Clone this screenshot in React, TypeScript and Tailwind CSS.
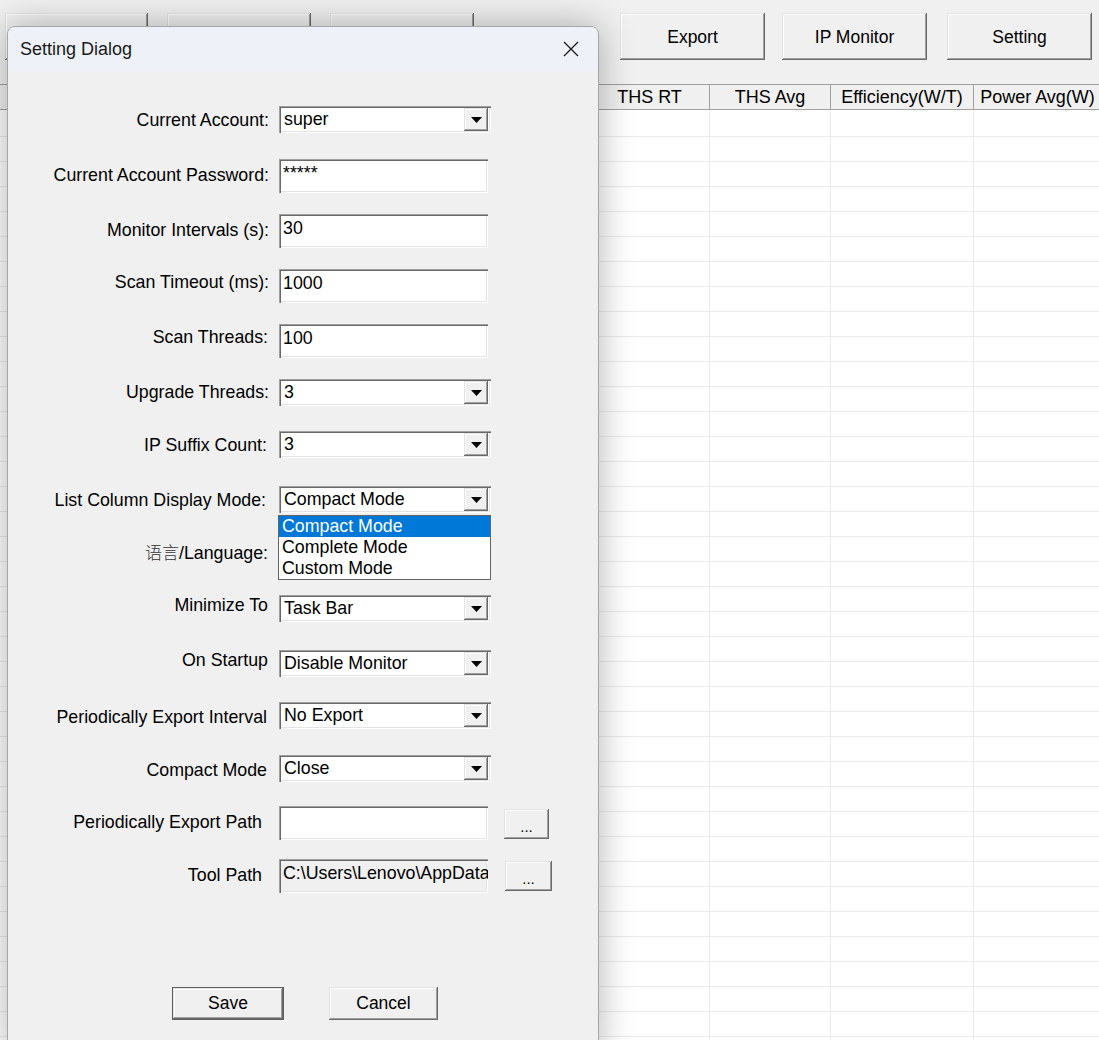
import type { ReactNode } from "react";

const raised =
  "bg-[#f0f0f0] shadow-[inset_-1px_-1px_0_#696969,inset_1px_1px_0_#e3e3e3,inset_-2px_-2px_0_#a0a0a0,inset_2px_2px_0_#ffffff]";
const sunken =
  "shadow-[inset_1px_1px_0_#a0a0a0,inset_2px_2px_0_#696969,inset_-1px_-1px_0_#ffffff,inset_-2px_-2px_0_#e3e3e3]";

const columns = [
  { title: "", w: "w-[590px]" },
  { title: "THS RT", w: "w-[119px]" },
  { title: "THS Avg", w: "w-[121px]" },
  { title: "Efficiency(W/T)", w: "w-[143px]" },
  { title: "Power Avg(W)", w: "w-[128px]" },
];

function Toolbar() {
  return (
    <div className="flex h-[84px] shrink-0 items-start pt-[13px] text-[17.5px]">
      <div className={`ml-[5px] h-[47px] w-[143px] ${raised}`} />
      <div className={`ml-[19px] h-[47px] w-[144px] ${raised}`} />
      <div className={`ml-[19px] h-[47px] w-[144px] ${raised}`} />
      <button className={`ml-[146px] flex h-[47px] w-[145px] items-center justify-center pt-[2px] ${raised}`}>Export</button>
      <button className={`ml-[17px] flex h-[47px] w-[145px] items-center justify-center pt-[2px] ${raised}`}>IP Monitor</button>
      <button className={`ml-[20px] flex h-[47px] w-[145px] items-center justify-center pt-[2px] ${raised}`}>Setting</button>
    </div>
  );
}

function MinerTable() {
  const rows = Array.from({ length: 38 }, (_, i) => i);
  return (
    <div className="flex flex-col">
      <div className="flex h-[26px] shrink-0 border-y border-[#a0a0a0] bg-[#f0f0f0] text-[18px] leading-[24px]">
        {columns.map((c, i) => (
          <div
            key={i}
            className={`${c.w} shrink-0 overflow-hidden whitespace-nowrap text-center ${i > 1 ? "border-l border-[#a0a0a0]" : ""}`}
          >
            {c.title}
          </div>
        ))}
      </div>
      <div className="bg-white pt-[2px]">
        {rows.map((r) => (
          <div key={r} className="flex h-[25px] border-b border-[#ebebeb]">
            {columns.map((c, i) => (
              <div key={i} className={`${c.w} shrink-0 ${i > 1 ? "border-l border-[#ebebeb]" : ""}`} />
            ))}
          </div>
        ))}
      </div>
    </div>
  );
}

function FormRow({
  label,
  rowClass,
  labelClass,
  children,
}: {
  label: ReactNode;
  rowClass: string;
  labelClass: string;
  children: ReactNode;
}) {
  return (
    <div className={`flex shrink-0 items-start ${rowClass}`}>
      <div className={`w-[271px] shrink-0 whitespace-nowrap text-right leading-[20px] ${labelClass}`}>{label}</div>
      {children}
    </div>
  );
}

function TextBox({ value, muted }: { value: string; muted?: boolean }) {
  return (
    <div
      className={`h-[34px] w-[209px] shrink-0 overflow-hidden whitespace-nowrap pl-[4px] pt-[4px] leading-[20px] ${sunken} ${muted ? "bg-[#f0f0f0]" : "bg-white"}`}
    >
      {value}
    </div>
  );
}

function ComboBox({ value, children }: { value: string; children?: ReactNode }) {
  return (
    <div className={`relative flex h-[27px] w-[212px] shrink-0 bg-white p-[2px] ${sunken}`}>
      <div className="flex-1 overflow-hidden whitespace-nowrap pl-[3px] leading-[23px]">{value}</div>
      <div className={`mr-[1px] flex w-[24px] items-center justify-center ${raised}`}>
        <svg width="11" height="6" viewBox="0 0 11 6">
          <path d="M0 0H11L5.5 6Z" fill="#000" />
        </svg>
      </div>
      {children}
    </div>
  );
}

function BrowseButton({ className }: { className: string }) {
  return (
    <button className={`flex shrink-0 items-center justify-center pt-[6px] text-[15px] ${raised} ${className}`}>...</button>
  );
}

function SettingDialog() {
  const modes = ["Compact Mode", "Complete Mode", "Custom Mode"];
  return (
    <div className="absolute left-[7px] top-[26px] flex h-[1030px] w-[592px] flex-col overflow-hidden rounded-t-[8px] border border-[#a6a6a6] bg-[#f0f0f0] shadow-[0_0_36px_rgba(0,0,0,0.3)]">
      <div className="flex h-[44px] shrink-0 items-center justify-between bg-[#eef2f8] pl-[12px]">
        <span className="text-[18px] text-[#1a1a1a]">Setting Dialog</span>
        <div className="mr-[4px] flex h-full w-[46px] items-center justify-center">
          <svg width="16" height="16" viewBox="0 0 16 16">
            <path d="M1 1L15 15M15 1L1 15" stroke="#1a1a1a" strokeWidth="1.3" />
          </svg>
        </div>
      </div>

      <div className="flex flex-col pt-[35px] text-[17.8px]">
        <FormRow label="Current Account:" rowClass="h-[53px]" labelClass="pr-[10px] pt-[4px]">
          <ComboBox value="super" />
        </FormRow>
        <FormRow label="Current Account Password:" rowClass="h-[55px]" labelClass="pr-[10px] pt-[6px]">
          <TextBox value="*****" />
        </FormRow>
        <FormRow label="Monitor Intervals (s):" rowClass="h-[55px]" labelClass="pr-[10px] pt-[6px]">
          <TextBox value="30" />
        </FormRow>
        <FormRow label="Scan Timeout (ms):" rowClass="h-[55px]" labelClass="pr-[10px] pt-[3px]">
          <TextBox value="1000" />
        </FormRow>
        <FormRow label="Scan Threads:" rowClass="h-[55px]" labelClass="pr-[11px] pt-[3px]">
          <TextBox value="100" />
        </FormRow>
        <FormRow label="Upgrade Threads:" rowClass="h-[52px]" labelClass="pr-[10px] pt-[3px]">
          <ComboBox value="3" />
        </FormRow>
        <FormRow label="IP Suffix Count:" rowClass="h-[55px]" labelClass="pr-[12px] pt-[4px]">
          <ComboBox value="3" />
        </FormRow>
        <FormRow label="List Column Display Mode:" rowClass="relative z-10 h-[53px]" labelClass="pr-[13px] pt-[4px]">
          <ComboBox value="Compact Mode">
            {/* open drop-down list */}
            <ul className="absolute left-[-1px] top-[29px] w-[213px] border border-[#646464] bg-white">
              {modes.map((m, i) => (
                <li
                  key={m}
                  className={`h-[21px] pl-[3px] leading-[21px] ${i === 0 ? "bg-[#0078d7] text-white" : ""}`}
                >
                  {m}
                </li>
              ))}
            </ul>
          </ComboBox>
        </FormRow>
        <FormRow
          label={
            <>
              <span className="font-['Noto_Sans_CJK_SC'] text-[17px] font-light text-[#333]">语言</span>/Language:
            </>
          }
          rowClass="h-[56px]"
          labelClass="pr-[11px] pt-[3px]"
        >
          <ComboBox value="" />
        </FormRow>
        <FormRow label="Minimize To" rowClass="h-[55px]" labelClass="pr-[11px] pt-[0px]">
          <ComboBox value="Task Bar" />
        </FormRow>
        <FormRow label="On Startup" rowClass="h-[52px]" labelClass="pr-[11px] pt-[0px]">
          <ComboBox value="Disable Monitor" />
        </FormRow>
        <FormRow label="Periodically Export Interval" rowClass="h-[53px]" labelClass="pr-[12px] pt-[5px]">
          <ComboBox value="No Export" />
        </FormRow>
        <FormRow label="Compact Mode" rowClass="h-[51px]" labelClass="pr-[12px] pt-[5px]">
          <ComboBox value="Close" />
        </FormRow>
        <FormRow label="Periodically Export Path" rowClass="h-[53px]" labelClass="pr-[17px] pt-[6px]">
          <TextBox value="" />
          <BrowseButton className="ml-[16px] mt-[3px] h-[30px] w-[45px]" />
        </FormRow>
        <FormRow label="Tool Path" rowClass="h-[34px]" labelClass="pr-[17px] pt-[6px]">
          <TextBox value="C:\Users\Lenovo\AppData" muted />
          <BrowseButton className="ml-[17px] mt-[2px] h-[30px] w-[47px]" />
        </FormRow>

        <div className="mt-[94px] flex pl-[164px] text-[17.5px]">
          <button className={`h-[33px] w-[112px] border border-[#5f5f5f] ${raised}`}>Save</button>
          <button className={`ml-[45px] h-[33px] w-[109px] ${raised}`}>Cancel</button>
        </div>
      </div>
    </div>
  );
}

export default function App() {
  return (
    <div className="relative h-[1040px] w-[1099px] overflow-hidden bg-[#f0f0f0] font-['Liberation_Sans',Arial,sans-serif] text-black">
      <div className="flex flex-col">
        <Toolbar />
        <MinerTable />
      </div>
      <SettingDialog />
    </div>
  );
}
